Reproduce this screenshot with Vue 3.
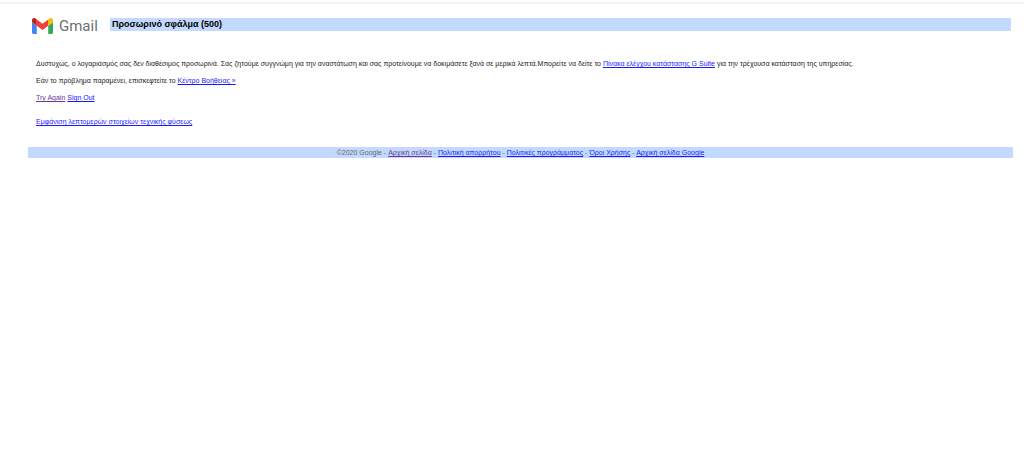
<template>
  <div class="page">
    <header class="header">
      <div class="logo">
        <svg class="logo-mark" viewBox="52 42 88 66" aria-hidden="true">
          <path fill="#4285f4" d="M58 108h14V74L52 59v43c0 3.32 2.69 6 6 6" />
          <path fill="#34a853" d="M120 108h14c3.32 0 6-2.69 6-6V59l-20 15" />
          <path fill="#fbbc04" d="M120 48v26l20-15v-8c0-7.42-8.47-11.65-14.4-7.2" />
          <path fill="#ea4335" d="M72 74V48l24 18 24-18v26L96 92" />
          <path fill="#c5221f" d="M52 51v8l20 15V48l-5.6-4.2c-5.94-4.45-14.4-.22-14.4 7.2" />
        </svg>
        <span class="logo-text">Gmail</span>
      </div>
      <h1 class="title">Προσωρινό σφάλμα (500)</h1>
    </header>

    <main class="content">
      <p>
        Δυστυχώς, ο λογαριασμός σας δεν διαθέσιμος προσωρινά. Σας ζητούμε συγγνώμη για την αναστάτωση και σας προτείνουμε να δοκιμάσετε ξανά σε μερικά λεπτά.Μπορείτε να δείτε το
        <a href="#">Πίνακα ελέγχου κατάστασης G Suite</a> για την τρέχουσα κατάσταση της υπηρεσίας.
      </p>
      <p>Εάν το πρόβλημα παραμένει, επισκεφτείτε το <a href="#">Κέντρο Βοήθειας »</a></p>
      <p><a href="#" class="visited">Try Again</a> <a href="#">Sign Out</a></p>
      <p class="details"><a href="#">Εμφάνιση λεπτομερών στοιχείων τεχνικής φύσεως</a></p>
    </main>

    <footer class="footer">
      ©2020 Google
      <template v-for="link in footerLinks" :key="link.label">
        - <a href="#" :class="{ visited: link.visited }">{{ link.label }}</a>{{ " " }}
      </template>
    </footer>
  </div>
</template>

<script setup>
const footerLinks = [
  { label: "Αρχική σελίδα", visited: true },
  { label: "Πολιτική απορρήτου" },
  { label: "Πολιτικές προγράμματος" },
  { label: "Όροι Χρήσης" },
  { label: "Αρχική σελίδα Google" },
];
</script>

<style>
body {
  background: #fff;
}
</style>

<style scoped>
.page {
  border-top: 2px solid #f1f2f3;
  margin-top: 2px;
  padding: 14px 11px 0 28px;
  font-family: "Liberation Sans", Arial, sans-serif;
  font-size: 7px;
  line-height: 9px;
  color: #222;
}

.header {
  display: flex;
  align-items: flex-start;
  gap: 11px;
  padding: 0 2px 0 4px;
}

.logo {
  display: flex;
  align-items: center;
  gap: 6px;
  width: 67px;
  height: 16px;
}

.logo-mark {
  width: 21px;
  height: 16px;
  flex: none;
}

.logo-text {
  font-family: Roboto, "Open Sans", sans-serif;
  font-size: 15px;
  line-height: 16px;
  color: #6b6f74;
}

.title {
  flex: 1;
  margin: 0;
  padding: 0 2px;
  border-radius: 1px;
  background: #c3d9ff;
  font-size: 9px;
  line-height: 13px;
  font-weight: bold;
  color: #000;
}

.content {
  padding: 25px 8px 0;
}

.content p {
  margin: 0 0 8px;
}

.content .details {
  margin-top: 15px;
}

a {
  color: #1a1aff;
}

a.visited {
  color: #6a3a98;
}

.footer {
  margin-top: 21px;
  padding: 1px 0;
  border-radius: 1px;
  background: #c3d9ff;
  text-align: center;
  color: #666;
}
</style>
